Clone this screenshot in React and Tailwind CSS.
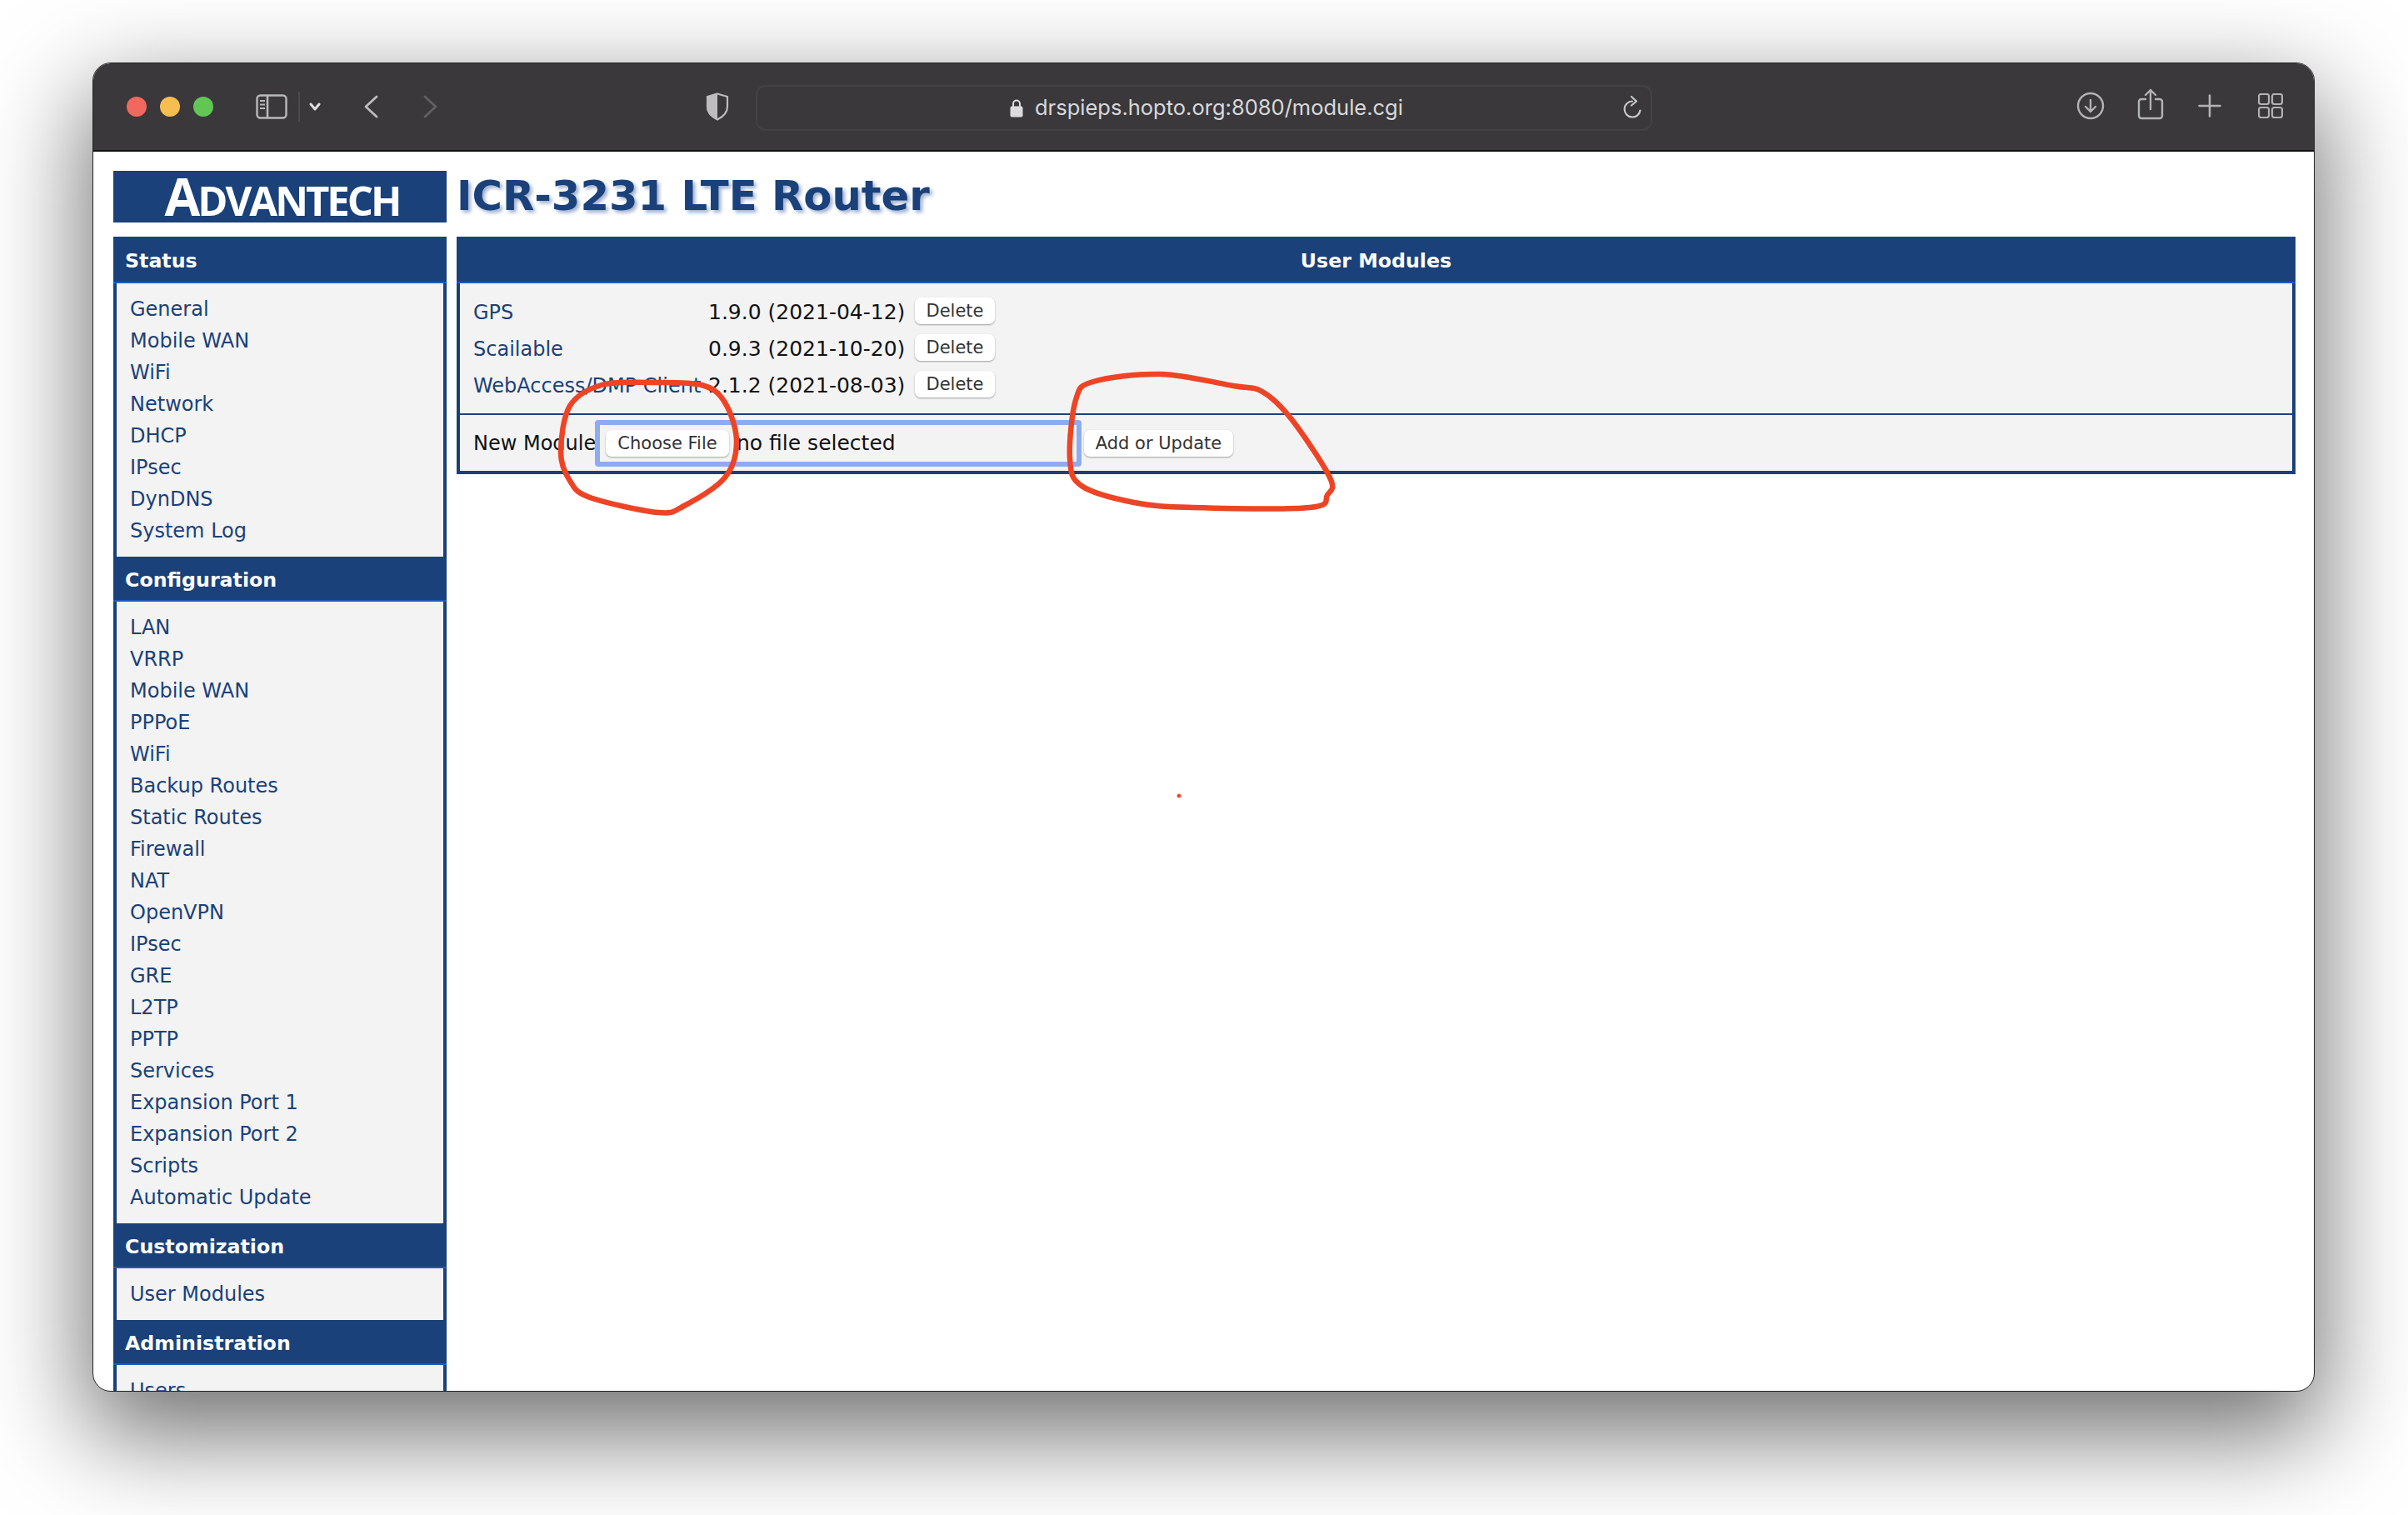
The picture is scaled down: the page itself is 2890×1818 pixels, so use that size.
const status = ["General", "Mobile WAN", "WiFi", "Network", "DHCP", "IPsec", "DynDNS", "System Log"];
const config = ["LAN", "VRRP", "Mobile WAN", "PPPoE", "WiFi", "Backup Routes", "Static Routes", "Firewall", "NAT", "OpenVPN", "IPsec", "GRE", "L2TP", "PPTP", "Services", "Expansion Port 1", "Expansion Port 2", "Scripts", "Automatic Update"];
const modules = [
  { name: "GPS", version: "1.9.0 (2021-04-12)" },
  { name: "Scailable", version: "0.9.3 (2021-10-20)" },
  { name: "WebAccess/DMP Client", version: "2.1.2 (2021-08-03)" },
];

// hand drawn marker loops, in page coordinates
const loopA = [[842, 462], [780, 459], [722, 462], [684, 487], [673, 543], [684, 577], [708, 597], [790, 615], [821, 607], [870, 573], [884, 530], [870, 483]];
const loopB = [[1393, 449], [1312, 458], [1291, 480], [1284, 550], [1298, 583], [1361, 603], [1431, 609], [1572, 609], [1593, 594], [1596, 573], [1550, 503], [1515, 470], [1480, 463]];

function smooth(pts) {
  const n = pts.length;
  let d = `M${pts[0][0]} ${pts[0][1]}`;
  for (let i = 0; i < n; i++) {
    const p0 = pts[(i - 1 + n) % n], p1 = pts[i], p2 = pts[(i + 1) % n], p3 = pts[(i + 2) % n];
    d += ` C${p1[0] + (p2[0] - p0[0]) / 6} ${p1[1] + (p2[1] - p0[1]) / 6} ${p2[0] - (p3[0] - p1[0]) / 6} ${p2[1] - (p3[1] - p1[1]) / 6} ${p2[0]} ${p2[1]}`;
  }
  return d;
}

function Header({ children, tall, center }) {
  return (
    <div className={`flex items-center bg-[#1a4179] text-white font-bold text-[23.7px] pt-[5px] border-b-2 border-[#1d5cc4] ${tall ? "h-[56px]" : "h-[54px]"} ${center ? "justify-center" : "pl-[14px]"}`}>
      {children}
    </div>
  );
}

function Section({ title, items, tall }) {
  return (
    <div>
      <Header tall={tall}>{title}</Header>
      <div className="bg-[#f3f3f3] border-x-4 border-[#1a4179] py-[12px] pl-[16px]">
        {items.map((item, i) => (
          <div key={i} className="h-[38px] flex items-center text-[24px] text-[#1a4179] whitespace-nowrap">{item}</div>
        ))}
      </div>
    </div>
  );
}

function Btn({ className, children }) {
  return (
    <div className={`h-[32px] flex items-center justify-center bg-white rounded-[7px] pt-[2px] shadow-[0_1px_2px_rgba(0,0,0,0.35)] text-[21px] text-[#333] whitespace-nowrap ${className}`}>
      {children}
    </div>
  );
}

function Toolbar() {
  return (
    <div className="h-[106px] shrink-0 flex items-center bg-[#3a383b] border-b-2 border-[#111] pl-[40px]">
      <div className="w-[24px] h-[24px] rounded-full bg-[#f1685e]" />
      <div className="w-[24px] h-[24px] rounded-full bg-[#f6bd50] ml-[16px]" />
      <div className="w-[24px] h-[24px] rounded-full bg-[#61c654] ml-[16px]" />
      {/* sidebar toggle */}
      <svg className="ml-[51px]" width="38" height="30" viewBox="0 0 38 30" fill="none" stroke="#b9b8ba" strokeWidth="2.4">
        <rect x="1.5" y="1.5" width="35" height="27" rx="4" />
        <path d="M14 2v26" strokeWidth="2.6" />
        <path d="M5 8h6M5 12.5h6M5 17h6" strokeWidth="2" />
      </svg>
      <div className="w-[2px] h-[36px] bg-[#4d4b4f] ml-[13px]" />
      <svg className="ml-[11px]" width="14" height="10" viewBox="0 0 14 10" fill="none" stroke="#e0dfe1" strokeWidth="3" strokeLinecap="round" strokeLinejoin="round">
        <path d="M2 2l5 6 5-6" />
      </svg>
      <svg className="ml-[52px]" width="17" height="28" viewBox="0 0 17 28" fill="none" stroke="#bdbcbe" strokeWidth="2.8" strokeLinecap="round" strokeLinejoin="round">
        <path d="M15 2L2 14l13 12" />
      </svg>
      <svg className="ml-[54px]" width="17" height="28" viewBox="0 0 17 28" fill="none" stroke="#616063" strokeWidth="2.8" strokeLinecap="round" strokeLinejoin="round">
        <path d="M2 2l13 12L2 26" />
      </svg>
      {/* shield */}
      <svg className="ml-[322px]" width="28" height="34" viewBox="0 0 28 34">
        <path d="M14 1.5l12 3.5v12c0 7-5 12-12 15.5C7 29 2 24 2 17V5z" fill="none" stroke="#bdbcbe" strokeWidth="2.2" />
        <path d="M14 1L1 5v12c0 8 6 13 13 16z" fill="#bdbcbe" />
      </svg>
      {/* address bar */}
      <div className="ml-[32px] mt-[2px] w-[1076px] h-[55px] rounded-[12px] border-2 border-[#444245] flex items-center relative font-['Inter',sans-serif]">
        <svg className="ml-[303px]" width="16" height="23" viewBox="0 0 16 23">
          <path d="M4 10V6.5a4 4 0 018 0V10" fill="none" stroke="#dcdbdd" strokeWidth="2" />
          <rect x="0.5" y="9.5" width="15" height="13" rx="2" fill="#dcdbdd" />
        </svg>
        <span className="ml-[14px] text-[25.5px] text-[#d9d8da] whitespace-nowrap">drspieps.hopto.org:8080/module.cgi</span>
        <svg className="absolute right-[8px] top-[10px]" width="26" height="30" viewBox="0 0 26 30" fill="none" stroke="#c9c8ca" strokeWidth="2.2" strokeLinecap="round" strokeLinejoin="round">
          <path d="M12 7.5a9.5 9.5 0 109.5 11" />
          <path d="M11 2l6 5.5-6 5" />
        </svg>
      </div>
      {/* right side actions */}
      <svg className="ml-[509px] mb-[2px]" width="34" height="34" viewBox="0 0 34 34" fill="none" stroke="#b3b2b4" strokeWidth="2.4" strokeLinecap="round" strokeLinejoin="round">
        <circle cx="17" cy="17" r="15" />
        <path d="M17 10v14M11 18l6 6 6-6" />
      </svg>
      <svg className="ml-[39px] mb-[6px]" width="32" height="38" viewBox="0 0 32 38" fill="none" stroke="#b3b2b4" strokeWidth="2.4" strokeLinecap="round" strokeLinejoin="round">
        <path d="M10 13H5a3 3 0 00-3 3v17a3 3 0 003 3h22a3 3 0 003-3V16a3 3 0 00-3-3h-5" />
        <path d="M16 25V2M10 8l6-6 6 6" />
      </svg>
      <svg className="ml-[41px] mb-[2px]" width="28" height="28" viewBox="0 0 28 28" fill="none" stroke="#b3b2b4" strokeWidth="2.6" strokeLinecap="round">
        <path d="M14 1.5v25M1.5 14h25" />
      </svg>
      <svg className="ml-[44px] mb-[2px]" width="30" height="30" viewBox="0 0 30 30" fill="none" stroke="#b3b2b4" strokeWidth="2.2">
        <rect x="1" y="1" width="12" height="12" rx="2.5" />
        <rect x="17" y="1" width="12" height="12" rx="2.5" />
        <rect x="1" y="17" width="12" height="12" rx="2.5" />
        <rect x="17" y="17" width="12" height="12" rx="2.5" />
      </svg>
    </div>
  );
}

function Logo() {
  return (
    <div className="w-[400px] h-[62px] shrink-0 bg-[#1a4179] text-white flex items-end justify-center pb-[9px] pl-[5px] font-['Open_Sans',sans-serif] font-bold leading-none tracking-[-3px]">
      <span className="text-[62px] leading-[46px]">A</span>
      <span className="text-[49px] leading-[36px]">DVANTECH</span>
    </div>
  );
}

export default function App() {
  return (
    <div className="relative w-[2890px] h-[1818px] bg-white overflow-hidden pl-[111px] pt-[75px] font-['DejaVu_Sans',sans-serif]">
      <div className="w-[2667px] h-[1595px] flex flex-col bg-white rounded-[22px] border border-[#222] overflow-hidden shadow-[0_44px_120px_8px_rgba(0,0,0,0.56)]">
        <Toolbar />
        <div className="flex-1 min-h-0 overflow-hidden pl-[24px] pr-[22px] pt-[23px]">
          <div className="flex items-center gap-[12px] h-[62px]">
            <Logo />
            <h1 className="text-[49.7px] leading-[60px] mb-[2px] font-bold text-[#1a4179] whitespace-nowrap [text-shadow:3px_3px_4px_#9fb0cf]">ICR-3231 LTE Router</h1>
          </div>
          <div className="flex gap-[12px] mt-[17px] items-start">
            <div className="w-[400px] shrink-0">
              <Section title="Status" items={status} tall />
              <Section title="Configuration" items={config} />
              <Section title="Customization" items={["User Modules"]} />
              <Section title="Administration" items={["Users"]} />
            </div>
            <div className="flex-1 min-w-0">
              <Header tall center>User Modules</Header>
              <div className="bg-[#f3f3f3] border-x-4 border-b-4 border-[#1a4179]">
                <div className="pt-[13px] pb-[11px] pl-[16px] border-b-2 border-[#1a4179]">
                  {modules.map((m) => (
                    <div key={m.name} className="h-[44px] flex items-center whitespace-nowrap">
                      <span className="w-[282px] text-[24px] text-[#1a4179]">{m.name}</span>
                      <span className="w-[248px] text-[25px] text-[#111]">{m.version}</span>
                      <Btn className="w-[96px] mb-[4px]">Delete</Btn>
                    </div>
                  ))}
                </div>
                <div className="h-[67px] flex items-center pl-[16px] whitespace-nowrap">
                  <span className="w-[146px] text-[24px] text-[#111]">New Module</span>
                  <div className="w-[584px] h-[56px] flex items-center border-[6px] rounded-[4px] border-[#8fabf0] pl-[7px]">
                    <Btn className="w-[148px]">Choose File</Btn>
                    <span className="ml-[9px] text-[25px] text-[#111]">no file selected</span>
                  </div>
                  <Btn className="w-[179px] ml-[3px]">Add or Update</Btn>
                </div>
              </div>
            </div>
          </div>
        </div>
      </div>
      {/* red marker annotations on top of the screenshot */}
      <svg className="absolute inset-0" width="2890" height="1818" viewBox="0 0 2890 1818" fill="none" stroke="#ee4426" strokeWidth="6.5" strokeLinecap="round">
        <path d={smooth(loopA)} />
        <path d={smooth(loopB)} />
        <circle cx="1415" cy="955" r="2" fill="#ee4426" strokeWidth="1" />
      </svg>
    </div>
  );
}
